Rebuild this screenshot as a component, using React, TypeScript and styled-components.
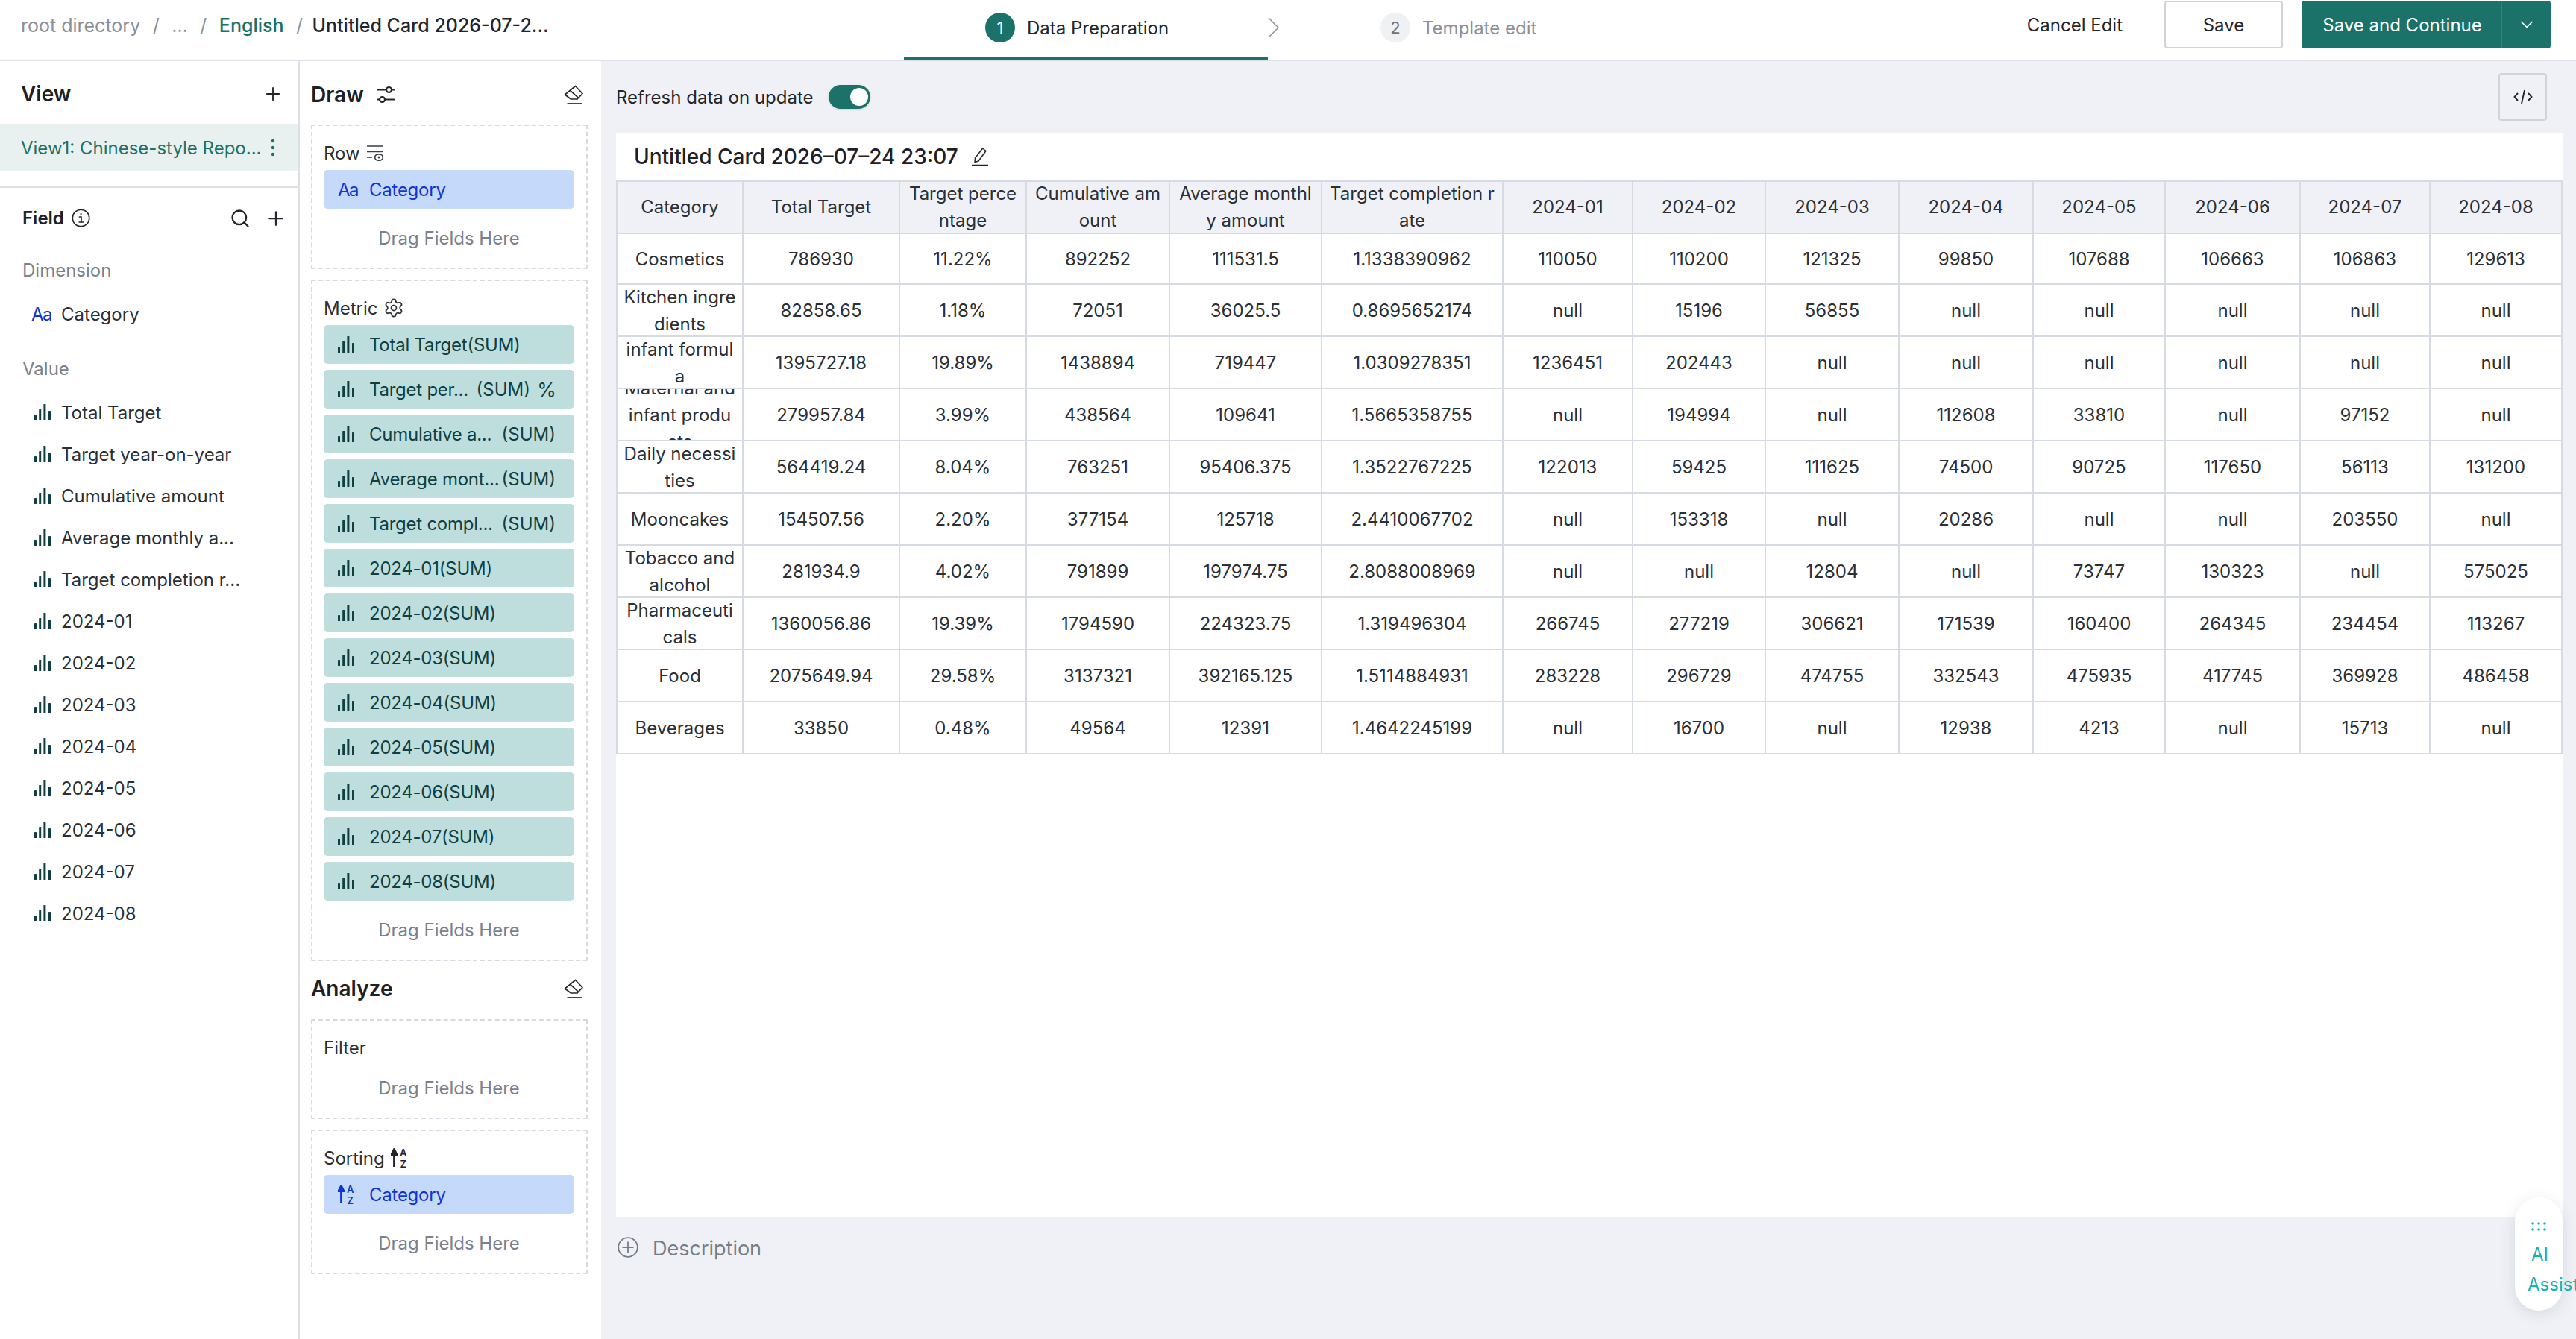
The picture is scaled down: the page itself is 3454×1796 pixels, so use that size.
import React from "react";
import styled, { createGlobalStyle } from "styled-components";
import { Plus, Search, Settings, ChevronDown } from "lucide-react";

const Global = createGlobalStyle`
  html, body { margin: 0; padding: 0; height: 100%; overflow: hidden; background: #fff; }
  body { font-family: Inter, "Noto Sans", "Liberation Sans", sans-serif; font-size: 24px; color: #22262c; }
  #root { height: 100%; }
  * { box-sizing: border-box; }
`;

const Page = styled.div`
  position: relative;
  width: 3454px;
  height: 1796px;
  display: flex;
  flex-direction: column;
  overflow: hidden;
`;

/* ---------- header ---------- */
const Header = styled.header`
  flex: 0 0 82px;
  display: flex;
  align-items: flex-start;
  border-bottom: 2px solid #dce0e6;
  background: #fff;
`;
const Crumbs = styled.nav`
  flex: 0 0 1212px;
  height: 68px;
  padding-left: 28px;
  display: flex;
  align-items: center;
  font-size: 25px;
`;
const Crumb = styled.span<{ $tone?: "muted" | "link" | "current" }>`
  color: ${(p) => (p.$tone === "link" ? "#1a7268" : p.$tone === "current" ? "#22262c" : "#8b9099")};
  font-weight: ${(p) => (p.$tone === "link" || p.$tone === "current" ? 500 : 400)};
  margin-left: ${(p) => (p.$tone === "current" ? "-4px" : "0")};
`;
const Slash = styled.span`
  color: #8b9099;
  margin: 0 16.5px;
`;
const StepTab = styled.div<{ $active?: boolean }>`
  display: flex;
  align-items: center;
  height: 80px;
  padding-bottom: ${(p) => (p.$active ? "2px" : "6px")};
  padding-left: ${(p) => (p.$active ? "109px" : "136px")};
  width: ${(p) => (p.$active ? "488px" : "auto")};
  border-bottom: ${(p) => (p.$active ? "4px solid #1a7268" : "0")};
  margin-bottom: -1px;
`;
const StepDot = styled.span<{ $active?: boolean }>`
  width: 40px;
  height: 40px;
  border-radius: 50%;
  display: flex;
  align-items: center;
  justify-content: center;
  margin-right: 16px;
  font-size: 22px;
  background: ${(p) => (p.$active ? "#1a7268" : "#f0f1f3")};
  color: ${(p) => (p.$active ? "#fff" : "#6f747c")};
`;
const StepText = styled.span<{ $active?: boolean }>`
  color: ${(p) => (p.$active ? "#22262c" : "#8b9099")};
`;
const StepArrow = styled.svg`
  width: 15px;
  height: 28px;
  margin-top: 23px;
  flex: none;
`;
const Actions = styled.div`
  margin-left: auto;
  padding: 1px 34px 0 0;
  display: flex;
  align-items: center;
`;
const CancelLink = styled.span`
  margin-right: 56px;
`;
const SaveButton = styled.button`
  width: 159px;
  height: 64px;
  margin-right: 25px;
  background: #fff;
  border: 2px solid #cfd4db;
  border-radius: 4px;
  font: inherit;
  color: inherit;
`;
const PrimaryGroup = styled.div`
  width: 334px;
  height: 64px;
  display: flex;
  background: #1a7268;
  color: #fff;
  border-radius: 4px;
`;
const PrimaryLabel = styled.span`
  flex: 0 0 269px;
  padding-left: 3px;
  display: flex;
  align-items: center;
  justify-content: center;
  border-right: 2px solid #348379;
`;
const PrimaryCaret = styled.span`
  flex: 1;
  display: flex;
  align-items: center;
  justify-content: center;
`;

/* ---------- body ---------- */
const Body = styled.div`
  flex: 1;
  min-height: 0;
  display: flex;
`;
const Sidebar = styled.aside`
  flex: 0 0 402px;
  min-width: 0;
  border-right: 2px solid #dce0e6;
  background: #fff;
`;
const PanelHead = styled.div<{ $h: number; $pad: string }>`
  height: ${(p) => p.$h}px;
  padding: ${(p) => p.$pad};
  display: flex;
  align-items: center;
  justify-content: space-between;
`;
const HeadTitle = styled.h2`
  margin: 0;
  font-size: 28px;
  line-height: 34px;
  font-weight: 600;
  color: #1d2025;
  display: flex;
  align-items: center;
  gap: 16px;
`;
const ViewRow = styled.div`
  height: 64px;
  padding: 0 31px 0 28px;
  display: flex;
  align-items: center;
  justify-content: space-between;
  background: #e9f1f0;
  color: #1a7268;
`;
const Divider = styled.div`
  height: 2px;
  margin-top: 20px;
  background: #dce0e6;
`;
const FieldHead = styled.div`
  height: 83px;
  padding: 0 15px 2px 30px;
  display: flex;
  align-items: center;
  justify-content: space-between;
`;
const FieldTitle = styled.div`
  font-weight: 600;
  display: flex;
  align-items: center;
  gap: 10px;
  color: #1d2025;
`;
const FieldTools = styled.div`
  display: flex;
  align-items: center;
  gap: 19px;
`;
const GroupLabel = styled.div`
  height: 56px;
  padding: 0 0 2px 30px;
  display: flex;
  align-items: center;
  color: #7b818c;
`;
const FieldList = styled.ul`
  list-style: none;
  margin: 2px 0 18px;
  padding: 0;
`;
const FieldItem = styled.li`
  height: 56px;
  display: flex;
  align-items: center;
  padding-left: 42px;
  color: #2b2f36;
`;
const FieldIconSlot = styled.span`
  width: 40px;
  display: flex;
  align-items: center;
`;
const Indent = styled.span`
  padding-left: 4px;
  display: flex;
`;
const AaMark = styled.span`
  color: #1034d6;
  letter-spacing: -1.5px;
`;

const DrawPanel = styled.aside`
  flex: 0 0 404px;
  min-width: 0;
  padding: 0 18px 0 15px;
  background: #fff;
`;
const EraseSlot = styled.span`
  display: flex;
  margin-right: 6px;
`;
const Well = styled.section<{ $mt?: number }>`
  margin-top: ${(p) => p.$mt ?? 0}px;
  padding: 20px 16px 14px 15px;
  border: 2px dashed #d6dae0;
  border-radius: 2px;
  display: flex;
  flex-direction: column;
  gap: 8px;
`;
const WellLabel = styled.div`
  height: 32px;
  margin-bottom: -1px;
  display: flex;
  align-items: center;
  gap: 8px;
  color: #2b2f36;
`;
const Chip = styled.div<{ $tone: "dim" | "metric" }>`
  flex: none;
  height: 52px;
  padding: 0 25px 0 19px;
  display: flex;
  align-items: center;
  border-radius: 5px;
  background: ${(p) => (p.$tone === "dim" ? "#c5d9fb" : "#bddedd")};
  color: ${(p) => (p.$tone === "dim" ? "#1034d6" : "#0f3f42")};
  white-space: nowrap;
`;
const ChipIcon = styled.span`
  width: 42px;
  flex: none;
  display: flex;
  align-items: center;
`;
const ChipName = styled.span`
  flex: 1;
  min-width: 0;
  letter-spacing: -0.25px;
`;
const ChipSum = styled.span`
  flex: none;
`;
const ChipPct = styled.span`
  margin: 0 2px 0 12px;
  width: 20px;
  font-size: 26px;
  display: flex;
  justify-content: center;
`;
const DropHint = styled.div`
  height: 52px;
  margin-top: 5px;
  display: flex;
  align-items: center;
  justify-content: center;
  color: #7b818c;
`;

/* ---------- main ---------- */
const Main = styled.main`
  flex: 1;
  min-width: 0;
  padding: 0 18px 0 20px;
  background: #eff1f6;
  display: flex;
  flex-direction: column;
`;
const Toolbar = styled.div`
  flex: 0 0 96px;
  display: flex;
  align-items: center;
  justify-content: space-between;
  padding-right: 21px;
`;
const ToggleGroup = styled.label`
  display: flex;
  align-items: center;
  gap: 20px;
`;
const ToggleTrack = styled.span`
  position: relative;
  width: 56px;
  height: 32px;
  border-radius: 16px;
  background: #1a7268;
  box-shadow: 0 1px 3px rgba(0, 0, 0, 0.15);
`;
const ToggleKnob = styled.span`
  position: absolute;
  right: 3px;
  top: 4px;
  width: 24px;
  height: 24px;
  border-radius: 50%;
  background: #fff;
`;
const CodeButton = styled.button`
  width: 65px;
  height: 64px;
  padding: 0;
  background: transparent;
  border: 2px solid #cfd4db;
  border-radius: 4px;
  display: flex;
  align-items: center;
  justify-content: center;
`;
const Card = styled.div`
  flex: 1;
  min-height: 0;
  background: #fff;
`;
const CardTitle = styled.div`
  height: 64px;
  padding: 0 0 0 24px;
  display: flex;
  align-items: center;
  gap: 17px;
  font-size: 28px;
  font-weight: 500;
  color: #1d2025;
`;
const Table = styled.table`
  table-layout: fixed;
  width: 2610px;
  border-collapse: separate;
  border-spacing: 0;
  border-top: 2px solid #d6dbe3;
  border-left: 2px solid #d6dbe3;
  color: #2b2f36;
  font-size: 24px;
`;
const Head = styled.th`
  padding: 0;
  font-weight: 400;
  background: #eff1f6;
  border-right: 2px solid #d6dbe3;
  border-bottom: 2px solid #d6dbe3;
`;
const Cell = styled.td`
  padding: 0;
  border-right: 2px solid #d6dbe3;
  border-bottom: 2px solid #d6dbe3;
`;
const CellBody = styled.div<{ $h: number; $nudge?: number }>`
  height: ${(p) => p.$h}px;
  padding: ${(p) => p.$nudge ?? 0}px 8px 0;
  display: flex;
  align-items: center;
  justify-content: center;
  overflow: hidden;
  text-align: center;
  line-height: 36px;
  word-break: break-all;
`;
const DescriptionBar = styled.div`
  flex: 0 0 164px;
  padding-top: 27px;
  display: flex;
  align-items: flex-start;
  gap: 19px;
  padding-left: 2px;
  font-size: 27px;
  line-height: 32px;
  color: #757c8a;
`;
const AssistPill = styled.div`
  position: absolute;
  left: 3372px;
  top: 1606px;
  width: 64px;
  height: 152px;
  border-radius: 32px;
  background: #fff;
  box-shadow: 0 4px 20px rgba(40, 50, 80, 0.12);
  color: #17b3ac;
  padding-top: 33px;
  display: flex;
  flex-direction: column;
  align-items: flex-start;
  white-space: nowrap;
`;
const AssistDots = styled.svg`
  width: 20px;
  height: 12px;
  margin-left: 22px;
`;
const AssistAi = styled.span`
  margin: 12px 0 0 22px;
  line-height: 40px;
`;
const AssistWord = styled.span`
  margin-left: 17px;
  line-height: 40px;
`;
const BarsSvg = styled.svg`
  flex: none;
  width: 22px;
  height: 22px;
  fill: #0f3f42;
`;
const IconNudge = styled.span`
  display: flex;
  margin-right: -8px;
`;

/* ---------- icons ---------- */
const Bars = () => (
  <BarsSvg viewBox="0 0 22 22">
    <rect x="0" y="14" width="3" height="8" rx="0.6" />
    <rect x="6.2" y="7" width="3" height="15" rx="0.6" />
    <rect x="12.4" y="0" width="3" height="22" rx="0.6" />
    <rect x="19" y="9" width="3" height="13" rx="0.6" />
  </BarsSvg>
);
const Eraser = () => (
  <svg width="26" height="26" viewBox="0 0 26 26" fill="none" stroke="#22262c" strokeWidth="1.7">
    <path d="M15.5 1.5 L25 11.5 L18 19 H9.5 L1.5 13 Z" strokeLinejoin="round" />
    <path d="M8 6.8 L19.6 17.4" />
    <path d="M4.5 25 H24.5" />
  </svg>
);
const Sliders = () => (
  <svg width="27" height="24" viewBox="0 0 27 24" fill="none" stroke="#22262c" strokeWidth="2.2">
    <path d="M1 5.5 H14 M21 5.5 H26 M1 18.5 H5 M12 18.5 H26" />
    <circle cx="17.5" cy="5.5" r="3.5" />
    <circle cx="8.5" cy="18.5" r="3.5" />
  </svg>
);
const RowIcon = () => (
  <svg width="24" height="22" viewBox="0 0 24 22" fill="none" stroke="#3a3f46" strokeWidth="1.7">
    <path d="M1 2 H23 M1 9.5 H23 M1 17 H8" />
    <ellipse cx="17" cy="17" rx="5.4" ry="4.2" />
    <circle cx="17" cy="17" r="1.5" fill="#3a3f46" stroke="none" />
  </svg>
);
const InfoIcon = () => (
  <svg width="25" height="25" viewBox="0 0 25 25" fill="none" stroke="#22262c" strokeWidth="1.6">
    <circle cx="12.5" cy="12.5" r="11.3" />
    <path d="M9.8 11 H13 V18 M9.5 18 H16" />
    <circle cx="12.6" cy="7.2" r="1.1" fill="#22262c" stroke="none" />
  </svg>
);
const DotsV = () => (
  <svg width="6" height="24" viewBox="0 0 6 24" fill="#1a7268">
    <circle cx="3" cy="3" r="2.2" />
    <circle cx="3" cy="12" r="2.2" />
    <circle cx="3" cy="21" r="2.2" />
  </svg>
);
const SortIcon = ({ color }: { color: string }) => (
  <svg width="24" height="26" viewBox="0 0 24 26" fill={color} fontFamily="Inter, sans-serif" fontWeight="600" fontSize="13">
    <path d="M4.5 25 V6 M1 8.5 L4.5 1.5 L8 8.5 Z" stroke={color} strokeWidth="2.8" />
    <text x="12" y="11">A</text>
    <text x="12.5" y="25.5">Z</text>
  </svg>
);
const Pencil = () => (
  <svg width="24" height="26" viewBox="0 0 24 26" fill="none" stroke="#22262c" strokeWidth="1.5">
    <path d="M15.5 2 L20 5.5 L10 19 L5 20.5 L5.5 15 Z" strokeLinejoin="round" />
    <path d="M1 24.5 H23" />
  </svg>
);
const CodeGlyph = () => (
  <svg width="26" height="22" viewBox="0 0 26 22" fill="none" stroke="#22262c" strokeWidth="1.9">
    <path d="M6 6 L1.5 11 L6 16 M20 6 L24.5 11 L20 16 M15 2 L11 20" />
  </svg>
);
const PlusCircle = () => (
  <svg width="28" height="28" viewBox="0 0 28 28" fill="none" stroke="#757c8a" strokeWidth="1.8">
    <circle cx="14" cy="14" r="12.8" />
    <path d="M14 6.5 V21.5 M6.5 14 H21.5" />
  </svg>
);

/* ---------- data ---------- */
const months = ["2024-01", "2024-02", "2024-03", "2024-04", "2024-05", "2024-06", "2024-07", "2024-08"];
const valueFields = ["Total Target", "Target year-on-year", "Cumulative amount", "Average monthly a...", "Target completion r...", ...months];
const metrics: { name: string; sum?: string; pct?: boolean }[] = [
  { name: "Total Target(SUM)" },
  { name: "Target per...", sum: "(SUM)", pct: true },
  { name: "Cumulative a...", sum: "(SUM)" },
  { name: "Average mont...", sum: "(SUM)" },
  { name: "Target compl...", sum: "(SUM)" },
  ...months.map((m) => ({ name: `${m}(SUM)` })),
];
const colWidths = [169, 210, 170, 192, 204, 243, 174, 178, 179, 180, 177, 181, 174, 177];
const columns = ["Category", "Total Target", "Target percentage", "Cumulative amount", "Average monthly amount", "Target completion rate", ...months];
const rows = [
  ["Cosmetics", "786930", "11.22%", "892252", "111531.5", "1.1338390962", "110050", "110200", "121325", "99850", "107688", "106663", "106863", "129613"],
  ["Kitchen ingredients", "82858.65", "1.18%", "72051", "36025.5", "0.8695652174", "null", "15196", "56855", "null", "null", "null", "null", "null"],
  ["infant formula", "1395727.18", "19.89%", "1438894", "719447", "1.0309278351", "1236451", "202443", "null", "null", "null", "null", "null", "null"],
  ["Maternal and infant products", "279957.84", "3.99%", "438564", "109641", "1.5665358755", "null", "194994", "null", "112608", "33810", "null", "97152", "null"],
  ["Daily necessities", "564419.24", "8.04%", "763251", "95406.375", "1.3522767225", "122013", "59425", "111625", "74500", "90725", "117650", "56113", "131200"],
  ["Mooncakes", "154507.56", "2.20%", "377154", "125718", "2.4410067702", "null", "153318", "null", "20286", "null", "null", "203550", "null"],
  ["Tobacco and alcohol", "281934.9", "4.02%", "791899", "197974.75", "2.8088008969", "null", "null", "12804", "null", "73747", "130323", "null", "575025"],
  ["Pharmaceuticals", "1360056.86", "19.39%", "1794590", "224323.75", "1.319496304", "266745", "277219", "306621", "171539", "160400", "264345", "234454", "113267"],
  ["Food", "2075649.94", "29.58%", "3137321", "392165.125", "1.5114884931", "283228", "296729", "474755", "332543", "475935", "417745", "369928", "486458"],
  ["Beverages", "33850", "0.48%", "49564", "12391", "1.4642245199", "null", "16700", "null", "12938", "4213", "null", "15713", "null"],
];

export default function App() {
  return (
    <Page>
      <Global />
      <Header>
        <Crumbs>
          <Crumb>root directory</Crumb>
          <Slash>/</Slash>
          <Crumb>...</Crumb>
          <Slash>/</Slash>
          <Crumb $tone="link">English</Crumb>
          <Slash>/</Slash>
          <Crumb $tone="current">Untitled Card 2026-07-2...</Crumb>
        </Crumbs>
        <StepTab $active>
          <StepDot $active>1</StepDot>
          <StepText $active>Data Preparation</StepText>
        </StepTab>
        <StepArrow viewBox="0 0 15 28" fill="none" stroke="#8b9099" strokeWidth="1.5">
          <path d="M1 1 L14 14 L1 27" />
        </StepArrow>
        <StepTab>
          <StepDot>2</StepDot>
          <StepText>Template edit</StepText>
        </StepTab>
        <Actions>
          <CancelLink>Cancel Edit</CancelLink>
          <SaveButton>Save</SaveButton>
          <PrimaryGroup>
            <PrimaryLabel>Save and Continue</PrimaryLabel>
            <PrimaryCaret>
              <ChevronDown size={28} strokeWidth={1.5} />
            </PrimaryCaret>
          </PrimaryGroup>
        </Actions>
      </Header>
      <Body>
        <Sidebar>
          <PanelHead $h={84} $pad="4px 28px 0">
            <HeadTitle>View</HeadTitle>
            <IconNudge>
              <Plus size={28} strokeWidth={1.6} color="#22262c" />
            </IconNudge>
          </PanelHead>
          <ViewRow>
            <span>View1: Chinese-style Repo...</span>
            <DotsV />
          </ViewRow>
          <Divider />
          <FieldHead>
            <FieldTitle>
              Field
              <InfoIcon />
            </FieldTitle>
            <FieldTools>
              <Search size={28} strokeWidth={2} color="#22262c" />
              <Plus size={30} strokeWidth={1.8} color="#22262c" />
            </FieldTools>
          </FieldHead>
          <GroupLabel>Dimension</GroupLabel>
          <FieldList>
            <FieldItem>
              <FieldIconSlot>
                <AaMark>Aa</AaMark>
              </FieldIconSlot>
              Category
            </FieldItem>
          </FieldList>
          <GroupLabel>Value</GroupLabel>
          <FieldList>
            {valueFields.map((f) => (
              <FieldItem key={f}>
                <FieldIconSlot>
                  <Indent>
                    <Bars />
                  </Indent>
                </FieldIconSlot>
                {f}
              </FieldItem>
            ))}
          </FieldList>
        </Sidebar>
        <DrawPanel>
          <PanelHead $h={85} $pad="4px 0 0">
            <HeadTitle>
              Draw
              <Sliders />
            </HeadTitle>
            <EraseSlot>
              <Eraser />
            </EraseSlot>
          </PanelHead>
          <Well>
            <WellLabel>
              Row
              <RowIcon />
            </WellLabel>
            <Chip $tone="dim">
              <ChipIcon>
                <AaMark>Aa</AaMark>
              </ChipIcon>
              <ChipName>Category</ChipName>
            </Chip>
            <DropHint>Drag Fields Here</DropHint>
          </Well>
          <Well $mt={14}>
            <WellLabel>
              Metric
              <Settings size={28} strokeWidth={1.5} color="#2b2f36" />
            </WellLabel>
            {metrics.map((m) => (
              <Chip $tone="metric" key={m.name}>
                <ChipIcon>
                  <Bars />
                </ChipIcon>
                <ChipName>{m.name}</ChipName>
                {m.sum && <ChipSum>{m.sum}</ChipSum>}
                {m.pct && <ChipPct>%</ChipPct>}
              </Chip>
            ))}
            <DropHint>Drag Fields Here</DropHint>
          </Well>
          <PanelHead $h={78} $pad="0 0 4px">
            <HeadTitle>Analyze</HeadTitle>
            <EraseSlot>
              <Eraser />
            </EraseSlot>
          </PanelHead>
          <Well>
            <WellLabel>Filter</WellLabel>
            <DropHint>Drag Fields Here</DropHint>
          </Well>
          <Well $mt={14}>
            <WellLabel>
              Sorting
              <SortIcon color="#22262c" />
            </WellLabel>
            <Chip $tone="dim">
              <ChipIcon>
                <SortIcon color="#1034d6" />
              </ChipIcon>
              <ChipName>Category</ChipName>
            </Chip>
            <DropHint>Drag Fields Here</DropHint>
          </Well>
        </DrawPanel>
        <Main>
          <Toolbar>
            <ToggleGroup>
              Refresh data on update
              <ToggleTrack>
                <ToggleKnob />
              </ToggleTrack>
            </ToggleGroup>
            <CodeButton>
              <CodeGlyph />
            </CodeButton>
          </Toolbar>
          <Card>
            <CardTitle>
              Untitled Card 2026–07–24 23:07
              <Pencil />
            </CardTitle>
            <Table>
              <colgroup>
                {colWidths.map((w, i) => (
                  <col key={i} width={w} />
                ))}
              </colgroup>
              <thead>
                <tr>
                  {columns.map((c) => (
                    <Head key={c}>
                      <CellBody $h={68}>{c}</CellBody>
                    </Head>
                  ))}
                </tr>
              </thead>
              <tbody>
                {rows.map((r, i) => (
                  <tr key={r[0]}>
                    {r.map((v, j) => (
                      <Cell key={j}>
                        <CellBody $h={i === 0 ? 66 : 68} $nudge={i === 0 ? 1 : 2}>
                          {v}
                        </CellBody>
                      </Cell>
                    ))}
                  </tr>
                ))}
              </tbody>
            </Table>
          </Card>
          <DescriptionBar>
            <PlusCircle />
            Description
          </DescriptionBar>
        </Main>
      </Body>
      <AssistPill>
        <AssistDots viewBox="0 0 20 12" fill="#17b3ac">
          {[2, 10, 18].map((x) => (
            <React.Fragment key={x}>
              <circle cx={x} cy={2} r={1.8} />
              <circle cx={x} cy={10} r={1.8} />
            </React.Fragment>
          ))}
        </AssistDots>
        <AssistAi>AI</AssistAi>
        <AssistWord>Assist</AssistWord>
      </AssistPill>
    </Page>
  );
}
